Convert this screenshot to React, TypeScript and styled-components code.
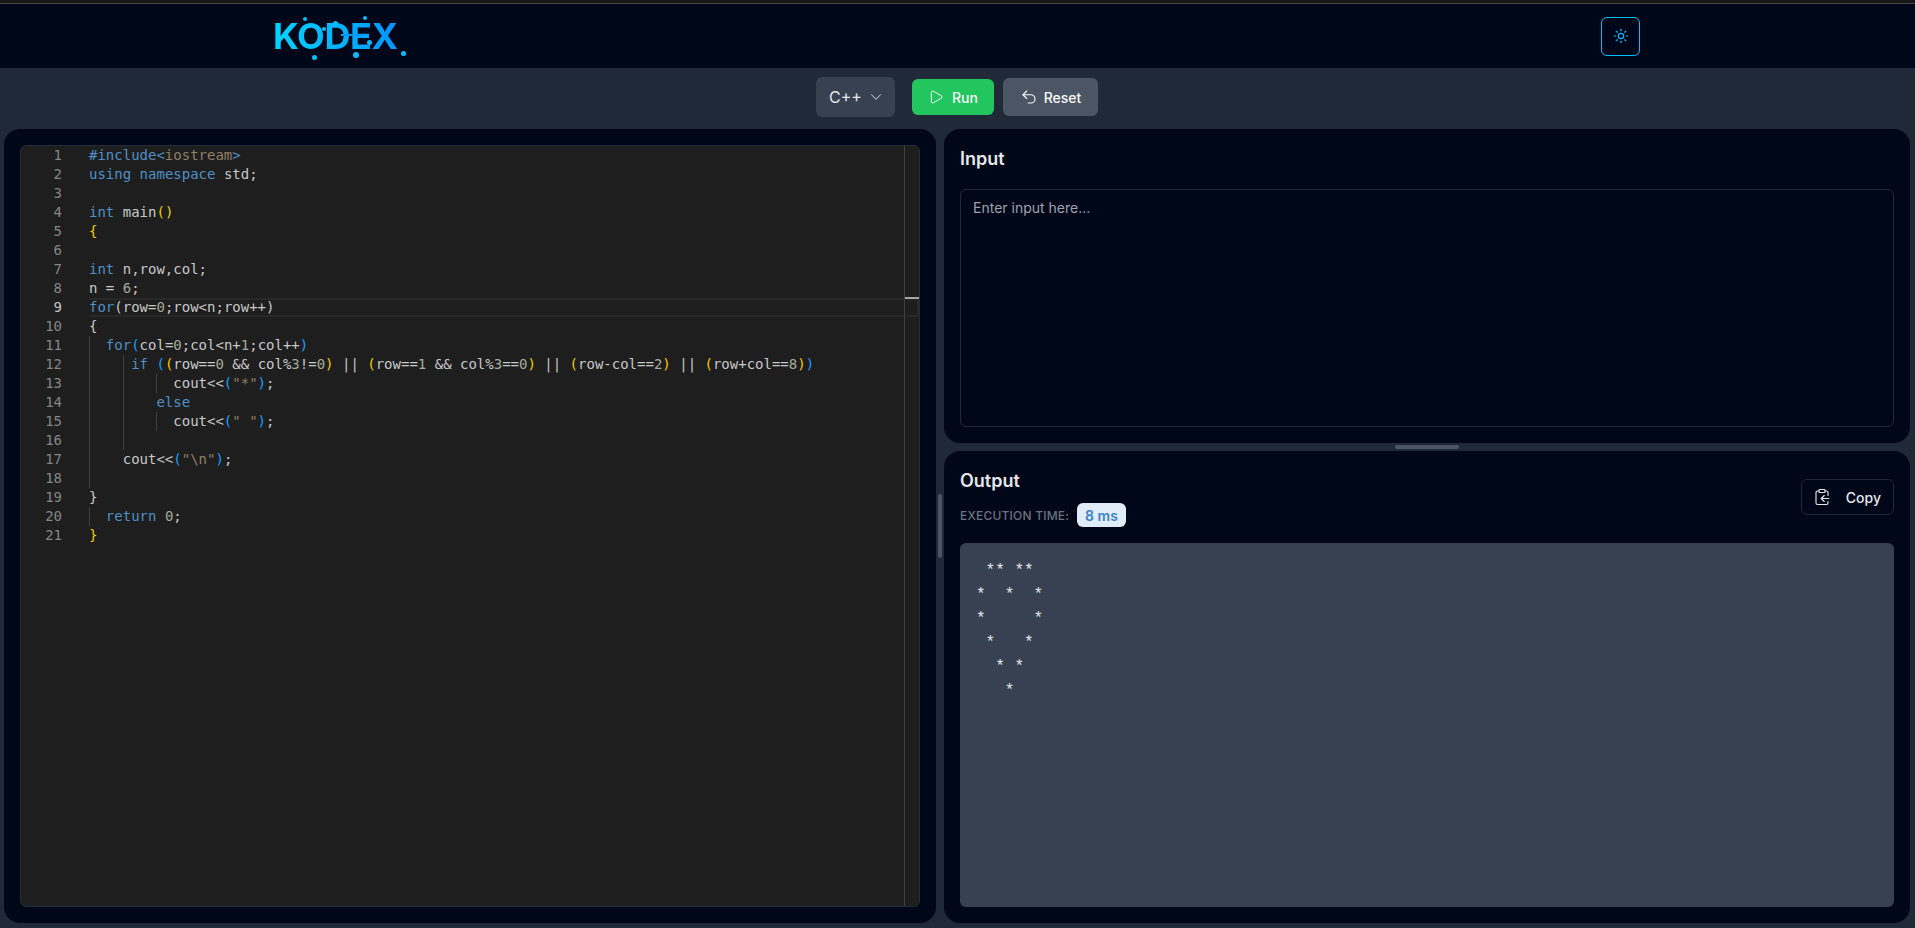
import React from "react";
import styled, { createGlobalStyle } from "styled-components";
import { ChevronDown, ClipboardCopy, Play, Sun, Undo2 } from "lucide-react";

const Global = createGlobalStyle`
  html, body { margin: 0; padding: 0; height: 100%; background: #1f2937; overflow: hidden; }
  * { box-sizing: border-box; }
  body { font-family: Inter, "Liberation Sans", sans-serif; }
`;

const Page = styled.div`
  height: 928px;
  display: flex;
  flex-direction: column;
  background: #1f2937;
`;

const TopEdge = styled.div`
  height: 4px;
  flex: none;
  background: #161616;
  border-bottom: 1px solid #4a4a4a;
`;

const Header = styled.header`
  height: 64px;
  flex: none;
  background: #000718;
  padding: 0 275px;
  display: flex;
  align-items: center;
  justify-content: space-between;
`;

const Logo = styled.div`
  position: relative;
  font-size: 36px;
  line-height: 40px;
  font-weight: 700;
  margin-left: -2px;
  letter-spacing: -0.4px;
  background: linear-gradient(90deg, #00d4ff, #0095ff);
  -webkit-background-clip: text;
  background-clip: text;
  color: transparent;
`;

const Particle = styled.i<{ $x: number; $y: number; $s: number }>`
  position: absolute;
  left: ${(p) => p.$x}px;
  top: ${(p) => p.$y}px;
  width: ${(p) => p.$s}px;
  height: ${(p) => p.$s}px;
  border-radius: 50%;
  background: #00bfff;
`;

const ParticleTrail = styled.i`
  position: absolute;
  left: 68px;
  top: 18px;
  width: 22px;
  height: 2px;
  background: #0095ff;
`;

const ThemeButton = styled.button`
  width: 39px;
  height: 39px;
  padding: 0;
  display: flex;
  align-items: center;
  justify-content: center;
  background: transparent;
  border: 1px solid #00bfff;
  border-radius: 6px;
  color: #00bfff;
`;

const Toolbar = styled.div`
  height: 61px;
  flex: none;
  padding: 0 1px 3px 0;
  display: flex;
  align-items: center;
  justify-content: center;
`;

const LanguageSelect = styled.button`
  width: 79px;
  height: 40px;
  margin-right: 17px;
  padding: 0 10px 0 13px;
  display: flex;
  align-items: center;
  justify-content: space-between;
  border: 0;
  border-radius: 6px;
  background: #374151;
  color: #e5e7eb;
  font: 400 16px Inter, sans-serif;
`;

const ActionButton = styled.button<{ $tone: "run" | "reset" }>`
  height: ${(p) => (p.$tone === "run" ? "36px" : "38px")};
  width: ${(p) => (p.$tone === "run" ? "82px" : "95px")};
  margin-right: ${(p) => (p.$tone === "run" ? "9px" : "0")};
  display: flex;
  align-items: center;
  justify-content: center;
  gap: ${(p) => (p.$tone === "run" ? "8px" : "6px")};
  border: 0;
  border-radius: 6px;
  background: ${(p) => (p.$tone === "run" ? "#22c55e" : "#4b5563")};
  color: #f9fafb;
  font: 500 14px Inter, sans-serif;
`;

const Workspace = styled.main`
  flex: 1;
  min-height: 0;
  display: flex;
  padding: 0 5px 5px 4px;
`;

const Panel = styled.section`
  background: #000718;
  border-radius: 16px;
  padding: 16px;
  display: flex;
  flex-direction: column;
  min-height: 0;
`;

const EditorPanel = styled(Panel)`
  width: 932px;
  flex: none;
`;

const VerticalSplit = styled.div`
  width: 8px;
  flex: none;
  display: flex;
  align-items: center;
  justify-content: center;
`;

const VerticalHandle = styled.div`
  width: 4px;
  height: 64px;
  border-radius: 2px;
  background: #4b5563;
`;

const RightColumn = styled.div`
  flex: 1;
  min-width: 0;
  display: flex;
  flex-direction: column;
`;

const InputPanel = styled(Panel)`
  height: 314px;
  flex: none;
`;

const HorizontalSplit = styled.div`
  height: 8px;
  flex: none;
  display: flex;
  align-items: center;
  justify-content: center;
`;

const HorizontalHandle = styled.div`
  width: 64px;
  height: 4px;
  border-radius: 2px;
  background: #4b5563;
`;

const OutputPanel = styled(Panel)`
  flex: 1;
`;

const Editor = styled.div`
  position: relative;
  flex: 1;
  display: flex;
  background: #1e1e1e;
  border: 1px solid #232c3a;
  border-radius: 6px;
  overflow: hidden;
  font-family: "DejaVu Sans Mono", monospace;
  font-size: 14px;
  line-height: 19px;
`;

const LineNumbers = styled.div`
  width: 68px;
  flex: none;
  padding-right: 27px;
  text-align: right;
  color: #858585;
`;

const LineNumber = styled.div<{ $active: boolean }>`
  height: 19px;
  color: ${(p) => (p.$active ? "#c6c6c6" : "#858585")};
`;

const Code = styled.div`
  flex: 1;
  min-width: 0;
`;

const CodeLine = styled.div<{ $active: boolean }>`
  position: relative;
  height: 19px;
  line-height: ${(p) => (p.$active ? "15px" : "19px")};
  white-space: pre;
  color: #cccccc;
  border: ${(p) => (p.$active ? "2px solid #282828" : "0")};
  border-left-width: 0;
  padding-left: 0;
`;

const IndentGuide = styled.span<{ $col: number }>`
  position: absolute;
  top: 0;
  bottom: 0;
  left: ${(p) => p.$col * 8.43}px;
  width: 1px;
  background: #404040;
`;

const Token = styled.span<{ $kind: string }>`
  color: ${(p) =>
    ({
      k: "#4f8fc6",
      s: "#8f7f65",
      g: "#f5cc00",
      b: "#179fff",
      n: "#a3ab9c",
      t: "#c8c8c8",
    })[p.$kind]};
`;

const Ruler = styled.div`
  position: absolute;
  top: 0;
  right: 0;
  bottom: 0;
  width: 15px;
  border-left: 1px solid #404040;
`;

const RulerCursor = styled.div`
  position: absolute;
  top: 151px;
  left: 0;
  right: 0;
  height: 2px;
  background: #a6a6a6;
`;

const PanelTitle = styled.h2`
  margin: 0;
  font-size: 18px;
  line-height: 28px;
  font-weight: 600;
  color: #e5e7eb;
`;

const InputBox = styled.textarea`
  flex: 1;
  margin-top: 16px;
  padding: 8px 12px;
  resize: none;
  background: transparent;
  border: 1px solid #1f2937;
  border-radius: 6px;
  outline: 0;
  color: #e5e7eb;
  font: 400 14px/20px Inter, sans-serif;
  &::placeholder { color: #9ca3af; opacity: 1; }
`;

const OutputHeader = styled.div`
  display: flex;
  align-items: center;
  justify-content: space-between;
  margin-bottom: 16px;
`;

const TimeRow = styled.div`
  display: flex;
  align-items: center;
  gap: 8px;
  margin-top: 8px;
`;

const TimeLabel = styled.span`
  font-size: 12px;
  font-weight: 500;
  letter-spacing: 0.2px;
  text-transform: uppercase;
  color: #6b7280;
`;

const TimeBadge = styled.span`
  height: 24px;
  padding: 0 8px;
  display: flex;
  align-items: center;
  border-radius: 6px;
  background: #e1ecf9;
  color: #3b82c4;
  font-size: 14px;
  font-weight: 600;
`;

const CopyButton = styled.button`
  width: 93px;
  height: 36px;
  padding: 0 12px 0 11px;
  display: flex;
  align-items: center;
  justify-content: space-between;
  background: transparent;
  border: 1px solid #1f2937;
  border-radius: 6px;
  color: #e5e7eb;
  font: 500 14px Inter, sans-serif;
`;

const OutputBox = styled.pre`
  flex: 1;
  margin: 0;
  padding: 16px;
  background: #374151;
  border-radius: 6px;
  color: #e5e7eb;
  font: 400 16px/24px "Liberation Mono", monospace;
`;

type Seg = [string, string];
const t = (s: string): Seg => ["t", s];
const k = (s: string): Seg => ["k", s];
const g = (s: string): Seg => ["g", s];
const b = (s: string): Seg => ["b", s];
const n = (s: string): Seg => ["n", s];
const s = (v: string): Seg => ["s", v];

const code: { segs: Seg[]; guides?: number[] }[] = [
  { segs: [k("#include<"), s("iostream"), k(">")] },
  { segs: [k("using"), t(" "), k("namespace"), t(" std;")] },
  { segs: [] },
  { segs: [k("int"), t(" main"), g("()")] },
  { segs: [g("{")] },
  { segs: [] },
  { segs: [k("int"), t(" n,row,col;")] },
  { segs: [t("n = "), n("6"), t(";")] },
  { segs: [k("for"), t("(row="), n("0"), t(";row<n;row++)")] },
  { segs: [t("{")] },
  { segs: [t("  "), k("for"), b("("), t("col="), n("0"), t(";col<n+"), n("1"), t(";col++"), b(")")], guides: [0] },
  {
    segs: [
      t("     "), k("if"), t(" "), b("("), g("("), t("row=="), n("0"), t(" && col%"), n("3"), t("!="), n("0"), g(")"),
      t(" || "), g("("), t("row=="), n("1"), t(" && col%"), n("3"), t("=="), n("0"), g(")"),
      t(" || "), g("("), t("row-col=="), n("2"), g(")"),
      t(" || "), g("("), t("row+col=="), n("8"), g(")"), b(")"),
    ],
    guides: [0, 4],
  },
  { segs: [t("          cout<<"), b("("), s('"*"'), b(")"), t(";")], guides: [0, 4, 8] },
  { segs: [t("        "), k("else")], guides: [0, 4] },
  { segs: [t("          cout<<"), b("("), s('" "'), b(")"), t(";")], guides: [0, 4, 8] },
  { segs: [], guides: [0, 4] },
  { segs: [t("    cout<<"), b("("), s('"\\n"'), b(")"), t(";")], guides: [0] },
  { segs: [], guides: [0] },
  { segs: [t("}")] },
  { segs: [t("  "), k("return"), t(" "), n("0"), t(";")], guides: [0] },
  { segs: [g("}")] },
];

const particles = [
  { x: 30, y: 1, s: 4 },
  { x: 60, y: 5, s: 5 },
  { x: 49, y: 11, s: 4 },
  { x: 90, y: 0, s: 4 },
  { x: 94, y: 24, s: 5 },
  { x: 39, y: 39, s: 5 },
  { x: 80, y: 36, s: 6 },
  { x: 128, y: 35, s: 5 },
];

const outputText = ` ** **
*  *  *
*     *
 *   *
  * *
   *`;

export default function App() {
  return (
    <Page>
      <Global />
      <TopEdge />
      <Header>
        <Logo>
          KODEX
          <ParticleTrail />
          {particles.map((p, i) => (
            <Particle key={i} $x={p.x} $y={p.y} $s={p.s} />
          ))}
        </Logo>
        <ThemeButton aria-label="Toggle theme">
          <Sun size={16} strokeWidth={1.75} />
        </ThemeButton>
      </Header>
      <Toolbar>
        <LanguageSelect>
          C++ <ChevronDown size={18} strokeWidth={1.25} />
        </LanguageSelect>
        <ActionButton $tone="run">
          <Play size={16} strokeWidth={1.5} /> Run
        </ActionButton>
        <ActionButton $tone="reset">
          <Undo2 size={18} strokeWidth={1.5} /> Reset
        </ActionButton>
      </Toolbar>
      <Workspace>
        <EditorPanel>
          <Editor>
            <LineNumbers>
              {code.map((_, i) => (
                <LineNumber key={i} $active={i === 8}>
                  {i + 1}
                </LineNumber>
              ))}
            </LineNumbers>
            <Code>
              {code.map((line, i) => (
                <CodeLine key={i} $active={i === 8}>
                  {line.guides?.map((c) => <IndentGuide key={c} $col={c} />)}
                  {line.segs.map((seg, j) => (
                    <Token key={j} $kind={seg[0]}>
                      {seg[1]}
                    </Token>
                  ))}
                </CodeLine>
              ))}
            </Code>
            <Ruler>
              <RulerCursor />
            </Ruler>
          </Editor>
        </EditorPanel>
        <VerticalSplit>
          <VerticalHandle />
        </VerticalSplit>
        <RightColumn>
          <InputPanel>
            <PanelTitle>Input</PanelTitle>
            <InputBox placeholder="Enter input here..." />
          </InputPanel>
          <HorizontalSplit>
            <HorizontalHandle />
          </HorizontalSplit>
          <OutputPanel>
            <OutputHeader>
              <div>
                <PanelTitle>Output</PanelTitle>
                <TimeRow>
                  <TimeLabel>Execution time:</TimeLabel>
                  <TimeBadge>8 ms</TimeBadge>
                </TimeRow>
              </div>
              <CopyButton>
                <ClipboardCopy size={18} strokeWidth={1.5} /> Copy
              </CopyButton>
            </OutputHeader>
            <OutputBox>{outputText}</OutputBox>
          </OutputPanel>
        </RightColumn>
      </Workspace>
    </Page>
  );
}
